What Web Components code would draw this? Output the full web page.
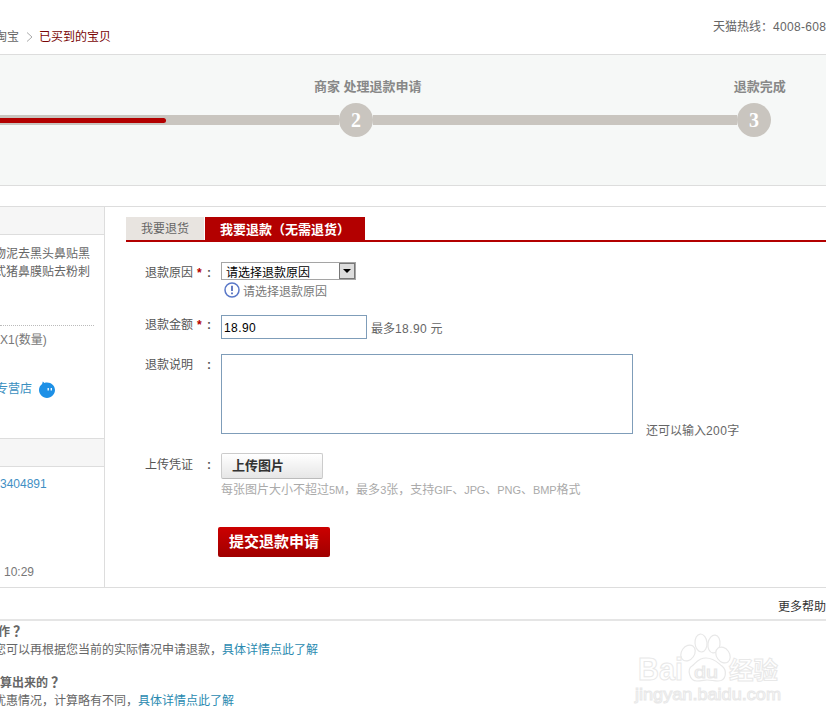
<!DOCTYPE html>
<html lang="zh">
<head>
<meta charset="utf-8">
<title>退款申请</title>
<style>
  html, body { margin: 0; padding: 0; overflow: hidden; background: #fff; }
  body { width: 826px; height: 724px; position: relative; color: #666;
    font: 12px/18px "Liberation Sans", "Noto Sans CJK SC", sans-serif; }
</style>
</head>
<body>
<tm-header></tm-header>
<tm-steps></tm-steps>
<tm-main>
  <tm-side slot="side"></tm-side>
  <tm-tabs></tm-tabs>
  <tm-form></tm-form>
</tm-main>
<tm-help></tm-help>
<tm-watermark></tm-watermark>

<script>
function shadow(el, html) {
  let tmpl = document.createElement('template');
  tmpl.innerHTML = html;
  el.attachShadow({mode: 'open'}).appendChild(tmpl.content.cloneNode(true));
}

customElements.define('tm-header', class extends HTMLElement {
  constructor() {
    super();
    shadow(this, `
      <style>
        :host { display: grid; grid-template-columns: 713px 1fr; align-items: start; height: 54px; box-sizing: content-box;
          border-bottom: 1px solid #ddd; overflow: hidden; line-height: 16px; }
        .crumb { display: flex; align-items: center; margin: 29px 0 0 -5px; color: #666; }
        .crumb svg { margin: 0 6px 0 7px; }
        .crumb b { font-weight: normal; color: #7a0505; }
        .hot { margin-top: 19px; white-space: nowrap; color: #666; }
        .hot span { letter-spacing: .3px; }
      </style>
      <div class="crumb">
        <span>淘宝</span>
        <svg width="7" height="10" viewBox="0 0 7 10"><path d="M1 .5 6 5 1 9.500" fill="none" stroke="#aaa"/></svg>
        <b>已买到的宝贝</b>
      </div>
      <div class="hot">天猫热线：<span>4008-608</span></div>`);
  }
});

customElements.define('tm-steps', class extends HTMLElement {
  constructor() {
    super();
    shadow(this, `
      <style>
        :host { display: block; height: 130px; background: #f6f8f7; border-bottom: 1px solid #ddd; overflow: hidden; }
        .labels { display: flex; padding: 24px 0 0 314px; font: bold 13px/16px "Liberation Sans", "Noto Sans CJK SC", sans-serif; color: #888; white-space: pre; }
        .labels span + span { margin-left: 312px; }
        .track { display: flex; align-items: center; margin-top: 8px; }
        .bar { height: 10px; background: #c9c5bf; display: flex; align-items: center; }
        .done { width: 166px; height: 5px; background: #b30000; border-radius: 0 3px 3px 0; }
        .dot { flex: none; width: 34px; height: 34px; border-radius: 50%; background: #c9c5bf; color: #fff;
          font: bold 20px/34px "Liberation Serif", serif; text-align: center; }
      </style>
      <div class="labels"><span>商家 处理退款申请</span><span>退款完成</span></div>
      <div class="track">
        <div class="bar" style="width:339px"><div class="done"></div></div>
        <div class="dot">2</div>
        <div class="bar" style="width:364px"></div>
        <div class="dot">3</div>
      </div>`);
  }
});

customElements.define('tm-main', class extends HTMLElement {
  constructor() {
    super();
    shadow(this, `
      <style>
        :host { display: flex; margin-top: 20px; height: 380px; border-top: 1px solid #ddd; border-bottom: 1px solid #ddd; overflow: hidden; }
        .left { flex: none; width: 104px; border-right: 1px solid #ddd; }
        .right { flex: 1; padding: 10px 0 0 21px; min-width: 0; }
      </style>
      <div class="left"><slot name="side"></slot></div>
      <div class="right"><slot></slot></div>`);
  }
});

customElements.define('tm-side', class extends HTMLElement {
  constructor() {
    super();
    shadow(this, `
      <style>
        :host { display: block; color: #666; white-space: nowrap; }
        .head { height: 27px; background: #f6f6f6; border-bottom: 1px solid #ddd; }
        .head.two { margin-top: 41px; border-top: 1px solid #ddd; }
        .goods { margin: 10px 0 0 -6px; }
        hr { margin: 44px 10px 0 0; border: 0; border-top: 1px dotted #bbb; }
        .line { line-height: 16px; }
        .qty { margin-top: 6px; color: #777; }
        .shop { display: flex; align-items: center; height: 16px; margin: 33px 0 0 -4px; color: #3a8fc0; }
        .shop svg { margin-left: 7px; }
        .order { margin-top: 9px; color: #3f8fc4; }
        .time { margin: 72px 0 0 4px; color: #777; }
      </style>
      <div class="head"></div>
      <div class="goods">物泥去黑头鼻贴黑<br>式猪鼻膜贴去粉刺</div>
      <hr>
      <div class="line qty">X1(数量)</div>
      <div class="line shop">专营店
        <svg width="16" height="17" viewBox="0 0 16 17"><path d="M8 1.500C12.400 1.500 16 4.900 16 9S12.400 17 8 17 0 13.100 0 9C0 6.600 1.200 4.500 3.100 3.100L3.800 .4 5.500 1.900C6.300 1.600 7.100 1.500 8 1.500Z" fill="#1d90e6"/><path d="M9.200 7v2.500M12.300 7v2.500" stroke="#fff" stroke-width="1.300"/></svg>
      </div>
      <div class="head two"></div>
      <div class="line order">3404891</div>
      <div class="line time">10:29</div>`);
  }
});

customElements.define('tm-tabs', class extends HTMLElement {
  constructor() {
    super();
    shadow(this, `
      <style>
        :host { display: flex; height: 23px; gap: 1px; border-bottom: 2px solid #b30000; }
        div { padding-left: 15px; box-sizing: border-box; white-space: nowrap; line-height: 25px; height: 23px; }
        .off { width: 78px; background: #e8e4e0; color: #666; }
        .on { width: 160px; background: #b30000; color: #fff; font-weight: bold; font-size: 13px; }
      </style>
      <div class="off">我要退货</div>
      <div class="on">我要退款（无需退货）</div>`);
  }
});

customElements.define('tm-field', class extends HTMLElement {
  constructor() {
    super();
    let star = this.hasAttribute('star') ? '*' : '';
    shadow(this, `
      <style>
        :host { display: flex; align-items: flex-start; }
        .label { flex: none; display: flex; width: 76px; height: 18px; margin-top: var(--label-top, 0px); color: #555; }
        .name { width: 52px; white-space: nowrap; }
        .star { width: 10px; color: #b30000; font-weight: bold; }
        .colon { font-weight: bold; }
      </style>
      <div class="label"><span class="name">${this.getAttribute('label')}</span><span class="star">${star}</span><span class="colon">:</span></div>
      <slot></slot>`);
  }
});

customElements.define('tm-form', class extends HTMLElement {
  constructor() {
    super();
    shadow(this, `
      <style>
        :host { display: block; margin: 20px 0 0 19px; --label-top: 2px; }
        .select { flex: none; display: flex; justify-content: space-between; box-sizing: border-box; width: 135px; height: 18px;
          border: 1px solid #a5a5a5; color: #000; line-height: 21px; padding-left: 4px; }
        .arrow { width: 16px; height: 16px; box-sizing: border-box; border: 1px solid #777; background: #ddd;
          display: flex; align-items: center; justify-content: center; }
        .arrow i { border: 4px solid transparent; border-top: 4px solid #000; border-bottom: 0; }
        .hint { display: flex; align-items: center; gap: 3px; height: 16px; color: #777; margin-left: 79px; }
        .hint span { margin-top: 4px; }
        .amount { flex: none; box-sizing: border-box; width: 146px; height: 24px; border: 1px solid #7f9db9; color: #000; line-height: 24px; padding-left: 2px; letter-spacing: .4px; }
        .note { margin: 5px 0 0 4px; color: #666; white-space: nowrap; }
        .note span, .left span { letter-spacing: .4px; }
        textarea { flex: none; box-sizing: border-box; display: block; width: 412px; height: 80px; margin: 0; border: 1px solid #7f9db9; padding: 2px; resize: none; outline: none; }
        .left { align-self: flex-end; margin: 0 0 -6px 13px; color: #666; white-space: nowrap; }
        .upload { flex: none; box-sizing: border-box; width: 102px; height: 26px; padding-left: 10px; border: 1px solid #ccc; border-bottom-color: #bbb; border-radius: 2px;
          background: linear-gradient(#fff, #e6e6e6); color: #333; font: bold 13px/24px "Liberation Sans", "Noto Sans CJK SC", sans-serif; }
        .tip { margin: 2px 0 0 76px; color: #aaa; white-space: nowrap; }
        .tip span { font-size: 11px; letter-spacing: -.1px; }
        .submit { width: 112px; height: 30px; margin: 28px 0 0 73px; border-radius: 2px; text-align: center;
          background: linear-gradient(#cc0000, #a00000); color: #fff; font: bold 15px/30px "Liberation Sans", "Noto Sans CJK SC", sans-serif; }
        .r2 { margin-top: 17px; --label-top: 1px; }
        .r3 { margin-top: 15px; }
        .r4 { margin-top: 19px; --label-top: 3px; }
      </style>
      <tm-field label="退款原因" star>
        <div class="select"><span>请选择退款原因</span><span class="arrow"><i></i></span></div>
      </tm-field>
      <div class="hint">
        <svg width="16" height="16" viewBox="0 0 16 16"><circle cx="8" cy="8" r="7" fill="#fff" stroke="#5a78c8" stroke-width="1.500"/><path d="M8 3.800v5.200M8 10.500v1.800" stroke="#4a66b8" stroke-width="1.700"/></svg>
        <span>请选择退款原因</span>
      </div>
      <tm-field class="r2" label="退款金额" star>
        <div class="amount">18.90</div>
        <div class="note">最多<span>18.90</span> 元</div>
      </tm-field>
      <tm-field class="r3" label="退款说明">
        <textarea></textarea>
        <div class="left">还可以输入<span>200</span>字</div>
      </tm-field>
      <tm-field class="r4" label="上传凭证">
        <div class="upload">上传图片</div>
      </tm-field>
      <div class="tip">每张图片大小不超过<span>5M</span>，最多<span>3</span>张，支持<span>GIF</span>、<span>JPG</span>、<span>PNG</span>、<span>BMP</span>格式</div>
      <div class="submit">提交退款申请</div>`);
  }
});

customElements.define('tm-help', class extends HTMLElement {
  constructor() {
    super();
    shadow(this, `
      <style>
        :host { display: block; overflow: hidden; white-space: nowrap; }
        .more { height: 20px; padding-top: 11px; border-bottom: 2px solid #e5e5e5; text-align: right; color: #333; line-height: 16px; }
        .q { height: 16px; font-weight: bold; color: #666; line-height: 16px; }
        .q span { margin-left: 3px; font-size: 14px; line-height: 14px; }
        .a { color: #666; line-height: 18px; margin: 1px 0 0 -6px; }
        a { color: #2a8ab0; text-decoration: none; }
        .q.first { margin: 3px 0 0 -2px; }
        .q.second { margin: 16px 0 0 0; }
      </style>
      <div class="more">更多帮助</div>
      <div class="q first">作<span>？</span></div>
      <div class="a">您可以再根据您当前的实际情况申请退款，<a href="#">具体详情点此了解</a></div>
      <div class="q second">算出来的<span>？</span></div>
      <div class="a">优惠情况，计算略有不同，<a href="#">具体详情点此了解</a></div>`);
  }
});

// image watermark lying over the page corner
customElements.define('tm-watermark', class extends HTMLElement {
  constructor() {
    super();
    shadow(this, `
      <style>
        :host { position: absolute; left: 630px; top: 632px; width: 156px; height: 78px; }
        svg { display: block; }
        text { fill: #fff; stroke: #e8e8e8; stroke-width: 1; font-family: "Liberation Sans", "Noto Sans CJK SC", sans-serif; }
      </style>
      <svg width="156" height="78" viewBox="0 0 156 78">
        <g fill="#fff" stroke="#e8e8e8" stroke-width="1.200">
          <ellipse cx="58" cy="21" rx="6.500" ry="8.500" transform="rotate(35 58 21)"/>
          <ellipse cx="71" cy="11" rx="6" ry="9" transform="rotate(-5 71 11)"/>
          <ellipse cx="84" cy="12" rx="6" ry="9" transform="rotate(8 84 12)"/>
          <ellipse cx="93" cy="23" rx="6.500" ry="8.500" transform="rotate(-35 93 23)"/>
          <path d="M76 26C68 26 66 31 62 34C57 37 59 49 67 49C72 49 74 48 77 48C81 48 84 49 88 49C97 49 97 38 92 34C88 31 84 26 76 26Z"/>
        </g>
        <text x="8" y="48" font-size="31" font-weight="bold" textLength="45" lengthAdjust="spacingAndGlyphs">Bai</text>
        <text x="64" y="46" font-size="17" textLength="24" lengthAdjust="spacingAndGlyphs">du</text>
        <text x="99" y="47" font-size="24" font-weight="bold" textLength="49" lengthAdjust="spacingAndGlyphs">经验</text>
        <text x="5" y="68" font-size="17" textLength="146" lengthAdjust="spacingAndGlyphs">jingyan.baidu.com</text>
      </svg>`);
  }
});
</script>
</body>
</html>
